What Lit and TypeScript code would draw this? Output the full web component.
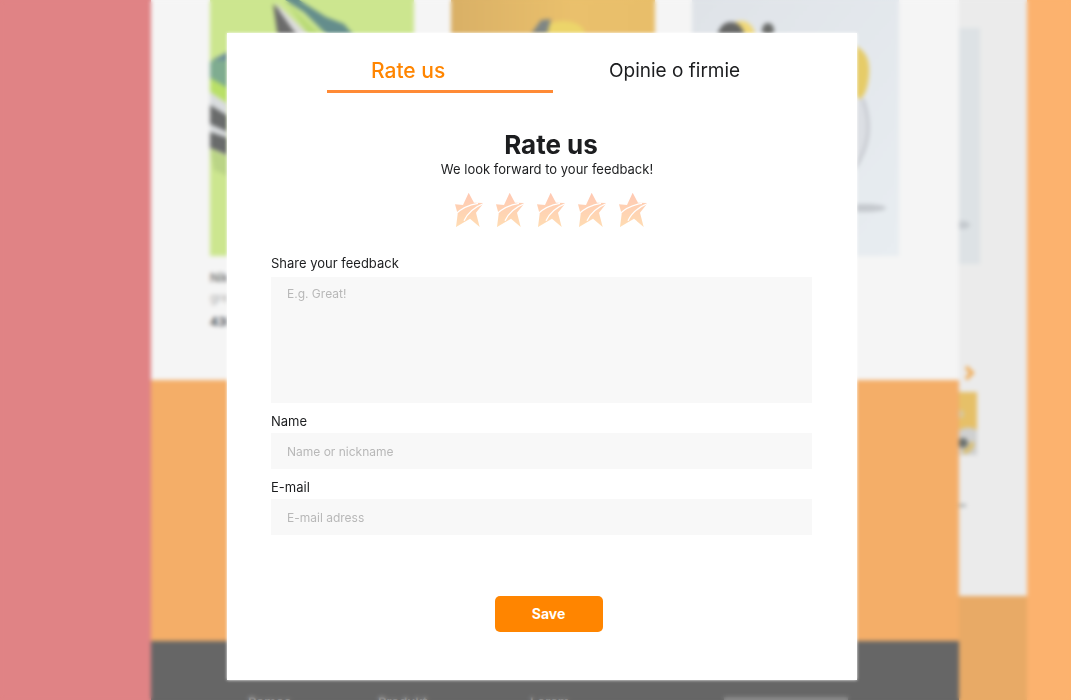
import { LitElement, html, css } from "lit";
import { customElement, state } from "lit/decorators.js";

@customElement("shop-backdrop")
export class ShopBackdrop extends LitElement {
  static styles = css`
    :host {
      display: grid;
      grid-template-columns: 151fr 808fr 68fr 44fr;
      overflow: hidden;
      font-family: Inter, "Liberation Sans", sans-serif;
    }
    .left {
      background: #e08385;
    }
    .right {
      background: #fcb26e;
    }
    .page {
      display: flex;
      flex-direction: column;
      min-width: 0;
    }
    .products {
      display: grid;
      grid-template-columns: 204fr 204fr 207fr;
      gap: 37px;
      height: 380px;
      padding: 0 60px 0 59px;
      box-sizing: border-box;
      background: #f5f5f5;
    }
    .product svg {
      display: block;
      width: 100%;
      height: 256px;
    }
    .name,
    .colour,
    .price {
      margin: 0;
      font-size: 12px;
      line-height: 20px;
      color: #777;
    }
    .name {
      margin-top: 12px;
      font-weight: 600;
    }
    .colour {
      color: #aaa;
    }
    .price {
      margin-top: 4px;
      font-weight: 700;
      color: #50555c;
    }
    .banner {
      height: 261px;
      background: #f4ae68;
    }
    .footer {
      flex: 1;
      display: grid;
      grid-template-columns: 130px 152px 194px 124px;
      padding: 52px 0 0 97px;
      background: #666;
      color: #aaa;
      font-size: 13px;
      line-height: 18px;
      font-weight: 600;
    }
    .field {
      height: 20px;
      margin-top: 4px;
      background: #8c8c8c;
    }
    .side {
      display: flex;
      flex-direction: column;
      background: #ebebeb;
    }
    .side svg {
      display: block;
      width: 100%;
      height: 596px;
    }
    .rest {
      flex: 1;
      background: #e8aa66;
    }
  `;

  render() {
    return html`
      <div class="left"></div>
      <div class="page">
        <div class="products">
          <div class="product">
            <svg viewBox="0 0 204 256" preserveAspectRatio="none">
              <rect width="204" height="256" fill="#cce68f" />
              <path d="M63 4l22 20 12 14H68z" fill="#6b6b6b" />
              <path d="M65 2l36 35H88L70 12z" fill="#dcdcdc" />
              <path d="M75 0h14l27 17 18 7 10 12h-26L94 12z" fill="#648d8c" />
              <path d="M76 2l34 32H98z" fill="#b9da76" />
              <path d="M0 62l18-10v38L0 78z" fill="#7fac90" />
              <path d="M2 60l16-8v8z" fill="#6b8c9a" />
              <path d="M0 78l18 10v15L0 92z" fill="#b9e067" />
              <path d="M0 92l18 12v52L0 148z" fill="#d9dcde" />
              <path d="M0 105l18 11v16L0 124zM0 132l18 6v17L0 148z" fill="#696b6b" />
              <path d="M0 150l18 6v20L4 170z" fill="#bad486" />
            </svg>
            <p class="name">Nike</p>
            <p class="colour">grey</p>
            <p class="price">430</p>
          </div>
          <div class="product">
            <svg viewBox="0 0 204 256" preserveAspectRatio="none">
              <defs>
                <linearGradient id="sand" x2="1" y2="0">
                  <stop stop-color="#d9b066" />
                  <stop offset=".6" stop-color="#eac06c" />
                  <stop offset="1" stop-color="#e8be6a" />
                </linearGradient>
              </defs>
              <rect width="204" height="256" fill="url(#sand)" />
              <ellipse cx="112" cy="34" rx="22" ry="13" fill="#ecd56a" />
              <path d="M80 34l10-14 10-1-4 15z" fill="#7f8684" />
            </svg>
          </div>
          <div class="product">
            <svg viewBox="0 0 207 256" preserveAspectRatio="none">
              <defs>
                <linearGradient id="sky" x2="1" y2="1">
                  <stop stop-color="#dfe3e8" />
                  <stop offset="1" stop-color="#e8edf1" />
                </linearGradient>
              </defs>
              <rect width="207" height="256" fill="url(#sky)" />
              <ellipse cx="49" cy="36" rx="14" ry="15" fill="#f0d878" />
              <ellipse cx="39" cy="36" rx="13" ry="14" fill="#656665" />
              <ellipse cx="76" cy="30" rx="6" ry="7" fill="#6a6c6a" />
              <path d="M161 45q18 6 16 30-2 20-9 24l-7-3z" fill="#e6cc68" />
              <path d="M161 99h11q12 44-11 70z" fill="#dcdfe4" />
              <path d="M171 99q14 38-9 70" fill="none" stroke="#c6c9cf" stroke-width="3" />
              <ellipse cx="172" cy="208" rx="22" ry="4" fill="#c4c8cd" />
            </svg>
          </div>
        </div>
        <div class="banner"></div>
        <div class="footer">
          <span>Pomoc</span><span>Produkt</span><span>Lorem</span>
          <div class="field"></div>
        </div>
      </div>
      <div class="side">
        <svg viewBox="0 0 68 596" preserveAspectRatio="none">
          <rect y="28" width="21" height="236" fill="#dde2e5" />
          <ellipse cx="3" cy="225" rx="8" ry="4" fill="#c4c9ce" />
          <path d="M7 367l6 6-6 6" fill="none" stroke="#f0b060" stroke-width="4" />
          <rect y="392" width="18" height="38" fill="#e6c068" />
          <circle cx="1" cy="414" r="4" fill="#d6c8a0" />
          <path d="M0 430q10-5 18 0v25H0z" fill="#cfd0d0" />
          <path d="M4 452q9-2 9-10" fill="none" stroke="#d9bf74" stroke-width="5" />
          <circle cx="4" cy="443" r="5" fill="#6c716e" />
          <rect y="504" width="7" height="3" fill="#b0b3b3" />
        </svg>
        <div class="rest"></div>
      </div>
      <div class="right"></div>
    `;
  }
}

@customElement("app-root")
export class AppRoot extends LitElement {
  @state() private rating = 0;

  static styles = css`
    :host {
      display: block;
      position: relative;
      min-height: 100vh;
      overflow: hidden;
      box-sizing: border-box;
      font-family: Inter, "Liberation Sans", sans-serif;
      color: #1c1d1f;
    }
    shop-backdrop {
      position: absolute;
      inset: 0;
    }
    .overlay {
      position: relative;
      display: flex;
      justify-content: center;
      align-items: flex-start;
      min-height: 100vh;
      box-sizing: border-box;
      padding: 33px 0 16px 13px;
      backdrop-filter: blur(2px);
    }
    .dialog {
      width: 630px;
      max-width: 100%;
      box-sizing: border-box;
      padding: 20px 45px 48px 44px;
      background: #fff;
      box-shadow: 0 0 3px #fff;
    }
    .tabs {
      display: flex;
      gap: 12px;
      padding-left: 56px;
    }
    .tab {
      width: 226px;
      height: 40px;
      padding: 0 0 2px 44px;
      border: 0;
      border-bottom: 3px solid transparent;
      background: none;
      font: 400 19px/32px Inter, "Liberation Sans", sans-serif;
      color: inherit;
      text-align: left;
      white-space: nowrap;
    }
    .tab.active {
      border-color: #ff8a35;
      color: #ff8500;
      font-size: 21px;
      font-weight: 500;
    }
    .intro {
      display: flex;
      flex-direction: column;
      align-items: center;
      padding: 36px 0 0 19px;
    }
    h1 {
      margin: 0;
      font-size: 26px;
      line-height: 32px;
      font-weight: 700;
    }
    .intro p {
      margin: 0;
      padding-right: 8px;
      font-size: 13px;
      line-height: 17px;
    }
    .stars {
      display: flex;
      gap: 11px;
      padding-top: 14px;
    }
    .star {
      width: 30px;
      height: 36px;
      padding: 0;
      border: 0;
      background: none;
      opacity: 0.36;
    }
    .star.on {
      opacity: 1;
    }
    .star svg {
      display: block;
      width: 30px;
      height: 36px;
    }
    form {
      display: flex;
      flex-direction: column;
      padding-top: 25px;
    }
    label {
      font-size: 13px;
      line-height: 20px;
    }
    textarea,
    input {
      width: 100%;
      box-sizing: border-box;
      margin: 0 0 8px;
      padding: 0 16px;
      height: 36px;
      border: 0;
      border-radius: 0;
      outline: 0;
      resize: none;
      background: #f8f8f8;
      font: 400 12px/16px Inter, "Liberation Sans", sans-serif;
      color: inherit;
    }
    textarea {
      height: 126px;
      margin-top: 4px;
      padding-top: 9px;
    }
    input {
      margin-top: 2px;
    }
    ::placeholder {
      color: #b8b8b8;
      opacity: 1;
    }
    .actions {
      display: flex;
      justify-content: center;
      padding: 53px 0 0 14px;
    }
    .save {
      width: 108px;
      height: 36px;
      padding: 0;
      border: 0;
      border-radius: 5px;
      background: #ff8500;
      color: #fff;
      font: 700 14px/20px Inter, "Liberation Sans", sans-serif;
    }
  `;

  private star(n: number) {
    return html`<button
      type="button"
      class="star ${n <= this.rating ? "on" : ""}"
      aria-label="${n} / 5"
      @click=${() => (this.rating = n)}
    >
      <svg viewBox="0 0 90 108">
        <defs>
          <linearGradient id="flame" x1=".5" y1="0" x2=".5" y2="1">
            <stop stop-color="#ff6a30" />
            <stop offset="1" stop-color="#ffa030" />
          </linearGradient>
        </defs>
        <path
          d="M44 2L60 32L89 33L66 62L77 105L48 80L6 105L11 66L3 37L27 39Z"
          fill="url(#flame)"
        />
        <g fill="none" stroke="#fff" stroke-width="4">
          <path d="M4 67Q30 41 72 34" />
          <path d="M30 86Q47 51 90 34" />
        </g>
      </svg>
    </button>`;
  }

  render() {
    return html`
      <shop-backdrop aria-hidden="true"></shop-backdrop>
      <div class="overlay">
        <div class="dialog" role="dialog" aria-labelledby="title">
          <div class="tabs">
            <button type="button" class="tab active">Rate us</button>
            <button type="button" class="tab">Opinie o firmie</button>
          </div>
          <div class="intro">
            <h1 id="title">Rate us</h1>
            <p>We look forward to your feedback!</p>
            <div class="stars">${[1, 2, 3, 4, 5].map((n) => this.star(n))}</div>
          </div>
          <form @submit=${(e: Event) => e.preventDefault()}>
            <label for="feedback">Share your feedback</label>
            <textarea id="feedback" placeholder="E.g. Great!"></textarea>
            <label for="name">Name</label>
            <input id="name" type="text" placeholder="Name or nickname" />
            <label for="email">E-mail</label>
            <input id="email" type="email" placeholder="E-mail adress" />
            <div class="actions">
              <button type="submit" class="save">Save</button>
            </div>
          </form>
        </div>
      </div>
    `;
  }
}
